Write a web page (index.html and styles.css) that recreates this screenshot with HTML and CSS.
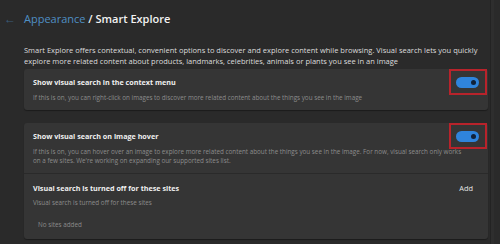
FILE: index.html
```html
<!DOCTYPE html>
<html lang="en">
<head>
  <meta charset="utf-8">
  <title>Smart Explore</title>
  <link rel="stylesheet" href="styles.css">
</head>
<body>
  <div class="page">
    <!-- Header -->
    <div class="header">
      <span class="back">&larr;</span>
      <h1><span class="crumb">Appearance</span> / Smart Explore</h1>
    </div>

    <p class="intro">Smart Explore offers contextual, convenient options to discover and explore content while browsing. Visual search lets you quickly explore more related content about products, landmarks, celebrities, animals or plants you see in an image</p>

    <!-- Context menu setting -->
    <div class="card">
      <div class="row">
        <div class="row-head">
          <div class="label">Show visual search in the context menu</div>
          <span class="toggle"></span>
        </div>
        <div class="hint">If this is on, you can right-click on images to discover more related content about the things you see in the image</div>
      </div>
    </div>

    <!-- Hover setting + site list -->
    <div class="card">
      <div class="row">
        <div class="row-head">
          <div class="label">Show visual search on image hover</div>
          <span class="toggle"></span>
        </div>
        <div class="hint">If this is on, you can hover over an image to explore more related content about the things you see in the image. For now, visual search only works on a few sites. We're working on expanding our supported sites list.</div>
      </div>
      <div class="sites">
        <div class="row-head">
          <div class="label">Visual search is turned off for these sites</div>
          <span class="add">Add</span>
        </div>
        <div class="hint">Visual search is turned off for these sites</div>
        <div class="empty">No sites added</div>
      </div>
    </div>
  </div>
  <div class="scroll"></div>
</body>
</html>
```

FILE: styles.css
```css
* {
  margin: 0;
  padding: 0;
  box-sizing: border-box;
}

body {
  background-color: #2a2a2a;
  font-family: 'Open Sans', 'Noto Sans', sans-serif;
  color: #e6e6e6;
  width: 500px;
  height: 244px;
  overflow: hidden;
  display: flex;
}

.page {
  width: 490px;
  padding: 8px 2px 0 24px;
}

/* Header */
.header {
  display: flex;
  align-items: center;
  height: 20px;
  margin-left: -20px;
}

.back {
  color: #3a5d7c;
  font-size: 12px;
  width: 20px;
}

.header h1 {
  font-size: 11px;
  font-weight: 600;
  color: #f2f2f2;
}

.crumb {
  color: #4f8fc4;
  font-weight: 400;
}

.intro {
  font-size: 7.5px;
  line-height: 11px;
  color: #dcdcdc;
  margin-top: 17px;
}

/* Cards */
.card {
  background-color: #353535;
  border-radius: 3px;
  margin-top: 2px;
  box-shadow: 0 1px 1px rgba(0, 0, 0, 0.35);
}

.card + .card {
  margin-top: 13px;
}

.row {
  padding: 8px 9px 8px 9px;
}

.row-head {
  display: flex;
  align-items: center;
  justify-content: space-between;
  height: 10px;
}

.label {
  font-size: 7.2px;
  font-weight: 700;
  color: #f0f0f0;
  line-height: 10px;
}

.hint {
  font-size: 6.3px;
  color: #8c8c8c;
  line-height: 9px;
  margin-top: 6px;
}

.row .hint {
  padding-right: 14px;
}

/* Toggle with red highlight box */
.toggle {
  position: relative;
  width: 23px;
  height: 11px;
  border-radius: 6px;
  background-color: #2f84dc;
}

.toggle::before {
  content: "";
  position: absolute;
  left: -7px;
  right: -8px;
  top: -8px;
  bottom: -7px;
  border: 2px solid #b8232b;
}

.toggle::after {
  content: "";
  position: absolute;
  right: 3px;
  top: 3px;
  width: 5px;
  height: 5px;
  border-radius: 50%;
  background-color: #10223a;
}

/* Site list */
.sites {
  border-top: 1px solid #2a2a2a;
  padding: 9px 15px 10px 9px;
}

.add {
  font-size: 7.4px;
  color: #e6e6e6;
}

.sites .hint {
  margin-top: 5px;
}

.empty {
  font-size: 6.3px;
  color: #8c8c8c;
  margin: 13px 0 0 5px;
  line-height: 9px;
}

.scroll {
  width: 4px;
  border-left: 1px solid #232323;
  background-color: #2e2e2e;
}
```
